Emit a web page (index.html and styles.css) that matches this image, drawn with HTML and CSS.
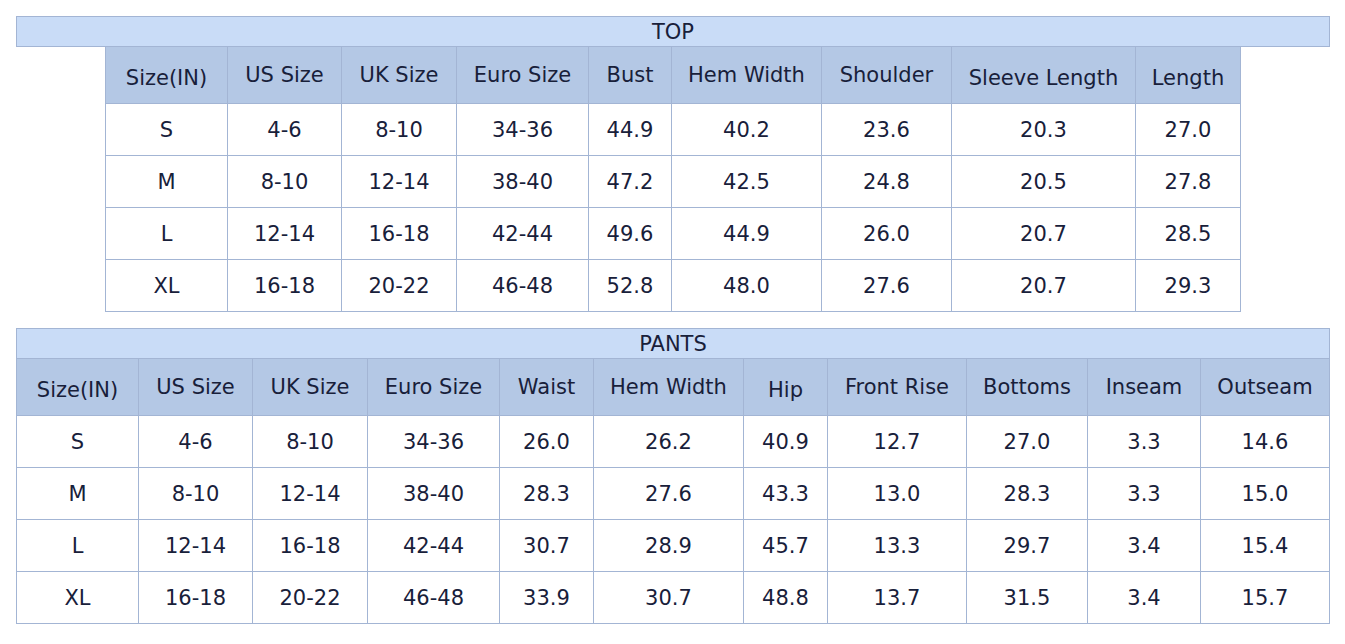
FILE: index.html
```html
<!DOCTYPE html>
<html>
<head>
<meta charset="utf-8">
<link rel="stylesheet" href="styles.css">
</head>
<body>
<section class="chart">
  <div class="title">TOP</div>
  <table class="grid top">
    <thead>
      <tr>
        <th class="w122 low">Size(IN)</th>
        <th class="w114">US Size</th>
        <th class="w115">UK Size</th>
        <th class="w132">Euro Size</th>
        <th class="w83">Bust</th>
        <th class="w150">Hem Width</th>
        <th class="w130">Shoulder</th>
        <th class="w184 low">Sleeve Length</th>
        <th class="w105 low">Length</th>
      </tr>
    </thead>
    <tbody>
      <tr><td>S</td><td>4-6</td><td>8-10</td><td>34-36</td><td>44.9</td><td>40.2</td><td>23.6</td><td>20.3</td><td>27.0</td></tr>
      <tr><td>M</td><td>8-10</td><td>12-14</td><td>38-40</td><td>47.2</td><td>42.5</td><td>24.8</td><td>20.5</td><td>27.8</td></tr>
      <tr><td>L</td><td>12-14</td><td>16-18</td><td>42-44</td><td>49.6</td><td>44.9</td><td>26.0</td><td>20.7</td><td>28.5</td></tr>
      <tr><td>XL</td><td>16-18</td><td>20-22</td><td>46-48</td><td>52.8</td><td>48.0</td><td>27.6</td><td>20.7</td><td>29.3</td></tr>
    </tbody>
  </table>
</section>
<section class="chart second">
  <div class="title">PANTS</div>
  <table class="grid pants">
    <thead>
      <tr>
        <th class="w122 low">Size(IN)</th>
        <th class="w114">US Size</th>
        <th class="w115">UK Size</th>
        <th class="w132">Euro Size</th>
        <th class="w94">Waist</th>
        <th class="w150">Hem Width</th>
        <th class="w84 low">Hip</th>
        <th class="w139">Front Rise</th>
        <th class="w121">Bottoms</th>
        <th class="w113">Inseam</th>
        <th class="w129">Outseam</th>
      </tr>
    </thead>
    <tbody>
      <tr><td>S</td><td>4-6</td><td>8-10</td><td>34-36</td><td>26.0</td><td>26.2</td><td>40.9</td><td>12.7</td><td>27.0</td><td>3.3</td><td>14.6</td></tr>
      <tr><td>M</td><td>8-10</td><td>12-14</td><td>38-40</td><td>28.3</td><td>27.6</td><td>43.3</td><td>13.0</td><td>28.3</td><td>3.3</td><td>15.0</td></tr>
      <tr><td>L</td><td>12-14</td><td>16-18</td><td>42-44</td><td>30.7</td><td>28.9</td><td>45.7</td><td>13.3</td><td>29.7</td><td>3.4</td><td>15.4</td></tr>
      <tr><td>XL</td><td>16-18</td><td>20-22</td><td>46-48</td><td>33.9</td><td>30.7</td><td>48.8</td><td>13.7</td><td>31.5</td><td>3.4</td><td>15.7</td></tr>
    </tbody>
  </table>
</section>
</body>
</html>
```

FILE: styles.css
```css
html, body {
  background: #ffffff;
}
body {
  margin: 16px 15px 0 16px;
  font-family: "DejaVu Sans", Verdana, sans-serif;
  font-size: 21px;
  color: #18203a;
}
.chart {
  width: 1314px;
}
.second {
  margin-top: 16px;
}
.title {
  box-sizing: border-box;
  height: 31px;
  padding-top: 1px;
  border: 1px solid #a3b5d4;
  background: #c9dcf7;
  text-align: center;
  line-height: 28px;
}
.grid {
  border-collapse: separate;
  border-spacing: 0;
  table-layout: fixed;
  margin-top: -1px;
  border-left: 1px solid #a3b5d4;
  border-top: 1px solid #a3b5d4;
}
.top {
  width: 1136px;
  margin-left: auto;
  margin-right: auto;
}
.pants {
  width: 1314px;
}
.grid th,
.grid td {
  box-sizing: border-box;
  padding: 0;
  border-right: 1px solid #a3b5d4;
  border-bottom: 1px solid #a3b5d4;
  text-align: center;
  vertical-align: middle;
  font-weight: normal;
  line-height: 24px;
}
.grid th {
  height: 57px;
  background: #b4c8e5;
}
.grid th.low {
  padding-top: 5px;
}
.grid td {
  height: 52px;
  background: #ffffff;
}
.w83 { width: 83px; }
.w84 { width: 84px; }
.w94 { width: 94px; }
.w105 { width: 105px; }
.w113 { width: 113px; }
.w114 { width: 114px; }
.w115 { width: 115px; }
.w121 { width: 121px; }
.w122 { width: 122px; }
.w129 { width: 129px; }
.w130 { width: 130px; }
.w132 { width: 132px; }
.w139 { width: 139px; }
.w150 { width: 150px; }
.w184 { width: 184px; }
```
